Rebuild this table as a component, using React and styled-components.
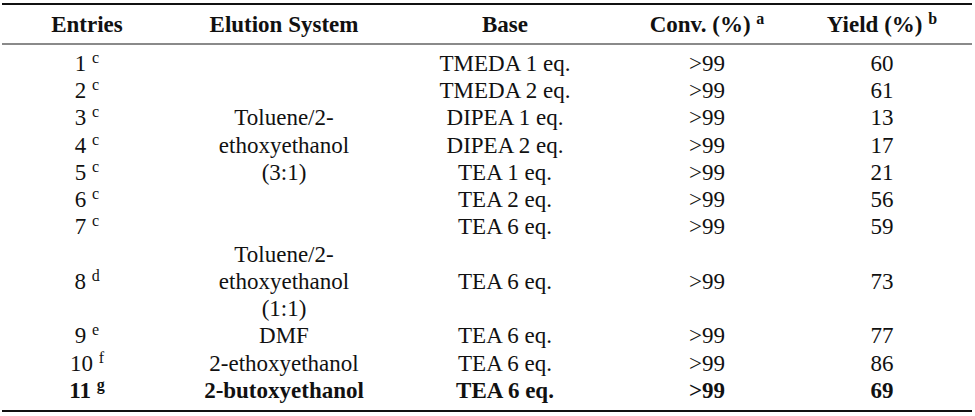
import React from 'react';
import styled, { createGlobalStyle } from 'styled-components';

const GlobalStyle = createGlobalStyle`
  html, body {
    margin: 0;
    padding: 0;
    background: #ffffff;
  }
  body {
    font-family: "Liberation Serif", "Times New Roman", serif;
    color: #111111;
  }
`;

const Page = styled.div`
  width: 975px;
  height: 416px;
  overflow: hidden;
  padding-top: 3px;
  box-sizing: border-box;
`;

const Table = styled.div`
  width: 970px;
  margin-left: 2px;
  display: grid;
  grid-template-columns: 170px 224px 218px 186px 1fr;
  align-items: center;
  border-top: 2px solid #111;
  border-bottom: 2.5px solid #111;
  font-size: 23px;
  line-height: 27.25px;
`;

const HeadCell = styled.div`
  font-weight: bold;
  text-align: center;
  padding: 5.6px 0 5.4px;
  padding-right: ${p => (p.$last ? '8px' : '0')};
  border-bottom: 2px solid #8a8a8a;
  white-space: nowrap;
`;

const Cell = styled.div`
  text-align: center;
  white-space: nowrap;
  font-weight: ${p => (p.$bold ? 'bold' : 'normal')};
  grid-row: ${p => (p.$span ? `span ${p.$span}` : 'auto')};
  padding-right: ${p => (p.$last ? '8px' : '0')};
  padding-top: ${p => (p.$first ? '4.6px' : '0')};
  padding-bottom: ${p => (p.$final ? '6px' : '0')};
`;

const Sup = styled.span`
  font-size: 16px;
  vertical-align: 8px;
  line-height: 0;
`;

const rows = [
  { n: '1', s: 'c', base: 'TMEDA 1 eq.', conv: '>99', y: '60' },
  { n: '2', s: 'c', base: 'TMEDA 2 eq.', conv: '>99', y: '61' },
  { n: '3', s: 'c', base: 'DIPEA 1 eq.', conv: '>99', y: '13' },
  { n: '4', s: 'c', base: 'DIPEA 2 eq.', conv: '>99', y: '17' },
  { n: '5', s: 'c', base: 'TEA 1 eq.', conv: '>99', y: '21' },
  { n: '6', s: 'c', base: 'TEA 2 eq.', conv: '>99', y: '56' },
  { n: '7', s: 'c', base: 'TEA 6 eq.', conv: '>99', y: '59' },
  { n: '8', s: 'd', sys: ['Toluene/2-', 'ethoxyethanol', '(1:1)'], base: 'TEA 6 eq.', conv: '>99', y: '73' },
  { n: '9', s: 'e', sys: ['DMF'], base: 'TEA 6 eq.', conv: '>99', y: '77' },
  { n: '10', s: 'f', sys: ['2-ethoxyethanol'], base: 'TEA 6 eq.', conv: '>99', y: '86' },
  { n: '11', s: 'g', sys: ['2-butoxyethanol'], base: 'TEA 6 eq.', conv: '>99', y: '69', bold: true },
];

const Lines = ({ items }) => items.map((t, i) => <div key={i}>{t}</div>);

export default function App() {
  return (
    <Page>
      <GlobalStyle />
      <Table>
        <HeadCell>Entries</HeadCell>
        <HeadCell>Elution System</HeadCell>
        <HeadCell>Base</HeadCell>
        <HeadCell>Conv. (%) <Sup>a</Sup></HeadCell>
        <HeadCell $last>Yield (%) <Sup>b</Sup></HeadCell>

        {rows.map((r, i) => {
          const first = i === 0;
          const final = i === rows.length - 1;
          return (
            <React.Fragment key={r.n}>
              <Cell $bold={r.bold} $first={first} $final={final}>
                {r.n} <Sup>{r.s}</Sup>
              </Cell>
              {first && (
                <Cell $span={7} $first>
                  <Lines items={['Toluene/2-', 'ethoxyethanol', '(3:1)']} />
                </Cell>
              )}
              {r.sys && (
                <Cell $bold={r.bold} $final={final}>
                  <Lines items={r.sys} />
                </Cell>
              )}
              <Cell $bold={r.bold} $first={first} $final={final}>{r.base}</Cell>
              <Cell $bold={r.bold} $first={first} $final={final}>{r.conv}</Cell>
              <Cell $bold={r.bold} $first={first} $final={final} $last>{r.y}</Cell>
            </React.Fragment>
          );
        })}
      </Table>
    </Page>
  );
}
